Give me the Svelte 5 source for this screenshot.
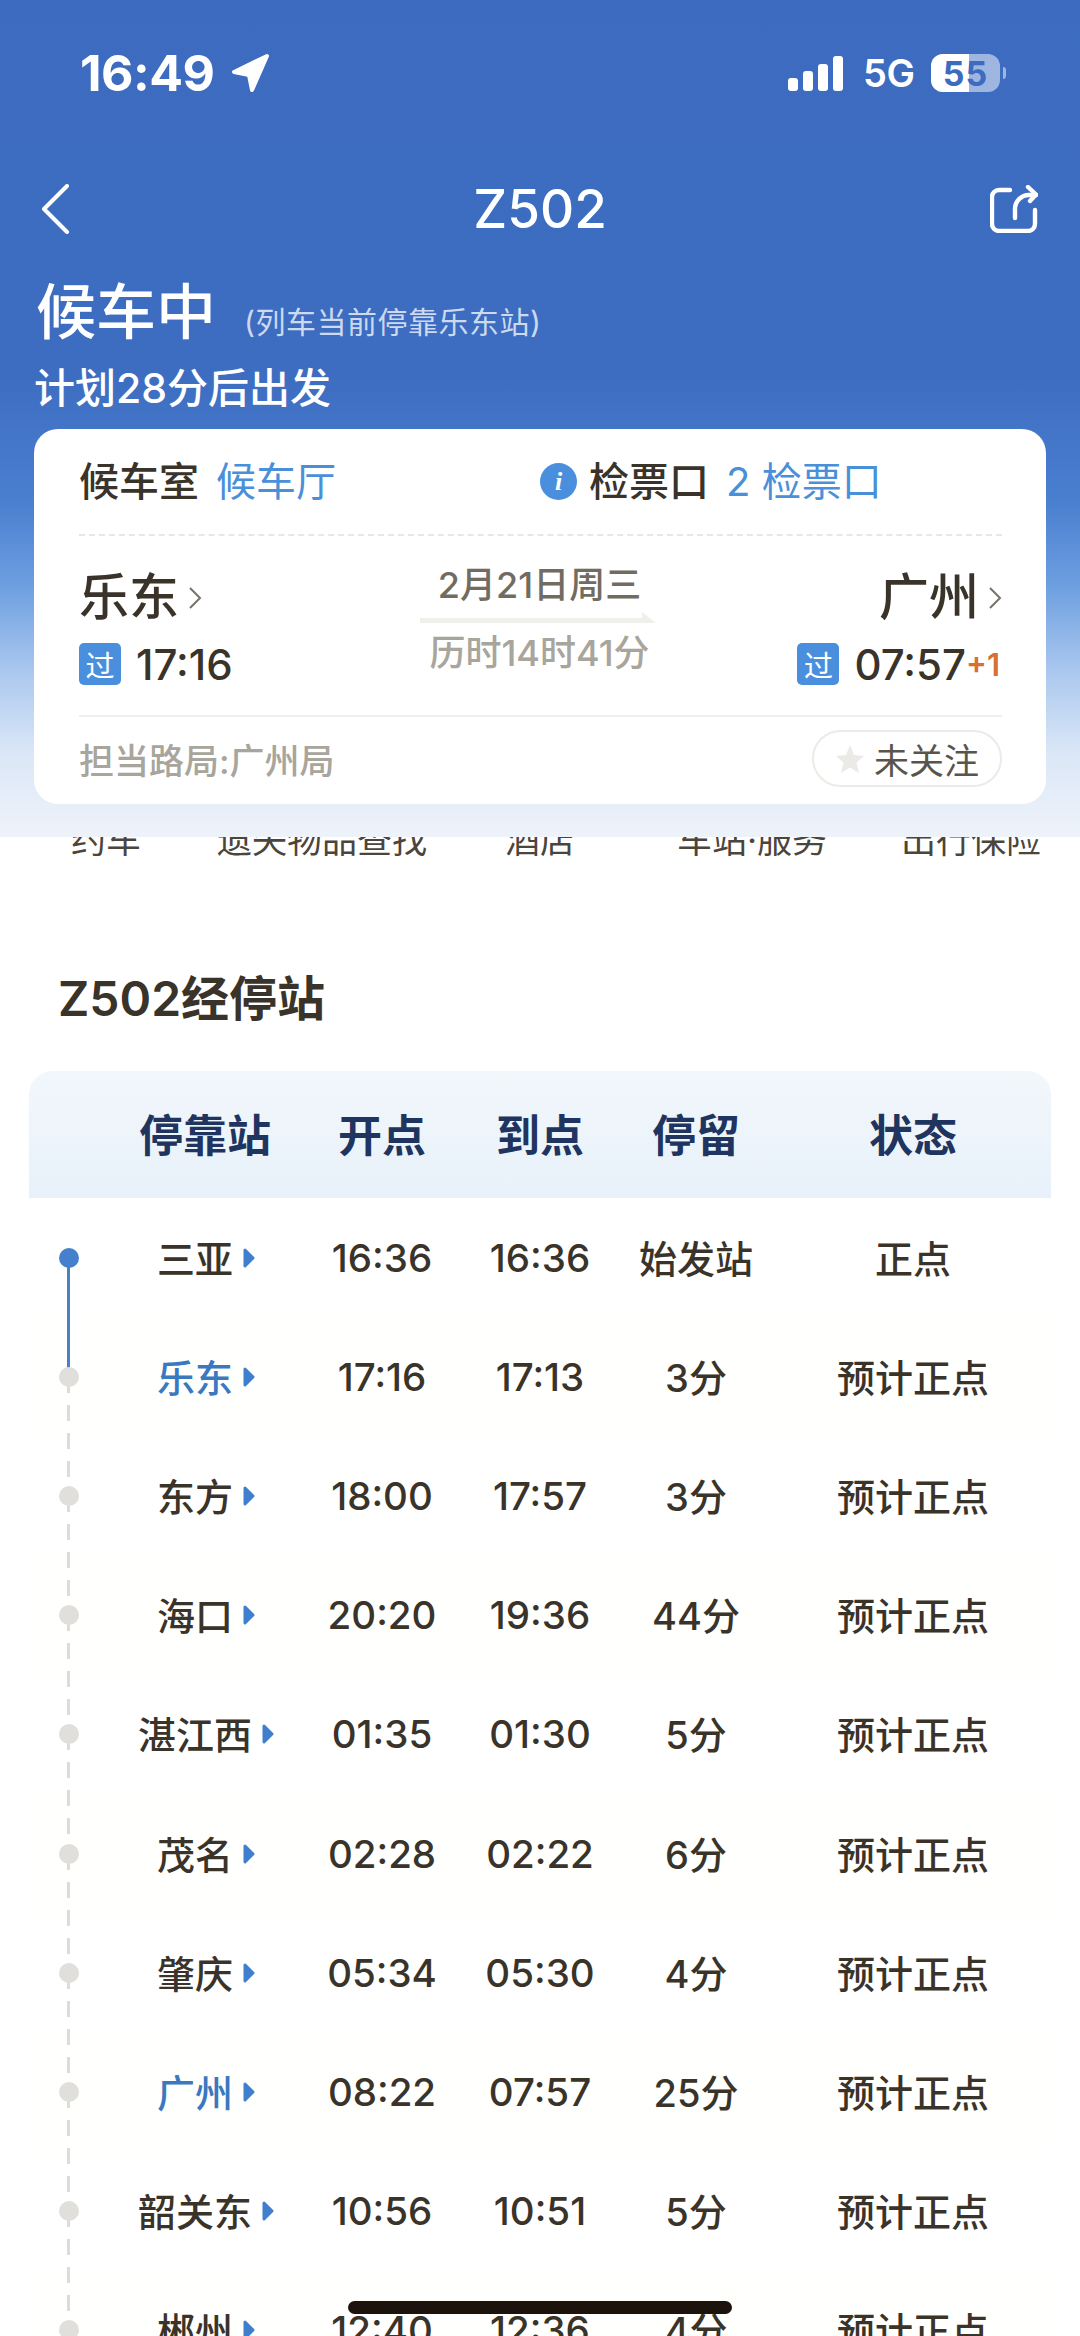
<script>
  const tools = [
    ['约车', 71], ['遗失物品查找', 217], ['酒店', 505], ['车站·服务', 677], ['出行保险', 901]
  ];
  const rows = [
    ['三亚', '16:36', '16:36', '始发站', '正点', false],
    ['乐东', '17:16', '17:13', '3分', '预计正点', true],
    ['东方', '18:00', '17:57', '3分', '预计正点', false],
    ['海口', '20:20', '19:36', '44分', '预计正点', false],
    ['湛江西', '01:35', '01:30', '5分', '预计正点', false],
    ['茂名', '02:28', '02:22', '6分', '预计正点', false],
    ['肇庆', '05:34', '05:30', '4分', '预计正点', false],
    ['广州', '08:22', '07:57', '25分', '预计正点', true],
    ['韶关东', '10:56', '10:51', '5分', '预计正点', false],
    ['郴州', '12:40', '12:36', '4分', '预计正点', false]
  ];
</script>

<div class="page">
  <section class="top">
    <div class="status">
      <div class="clock">
        <span>16:49</span>
        <svg class="loc" width="42" height="42" viewBox="0 0 42 42"><path d="M38 4 L5 20 L20 23 L23 38 Z" fill="#fff" stroke="#fff" stroke-width="4" stroke-linejoin="round"/></svg>
      </div>
      <div class="sys">
        <div class="signal"><i class="b1"></i><i class="b2"></i><i class="b3"></i><i class="b4"></i></div>
        <span class="net">5G</span>
        <div class="battery"><div class="fill"></div><span>55</span></div>
        <div class="nub"></div>
      </div>
    </div>

    <div class="nav">
      <svg width="30" height="50" viewBox="0 0 30 50"><path d="M27 2 L4 25 L27 48" fill="none" stroke="#fff" stroke-width="4" stroke-linecap="round" stroke-linejoin="round"/></svg>
      <div class="train">Z502</div>
      <svg class="share" width="48" height="48" viewBox="0 0 48 48" fill="none" stroke="#fff" stroke-width="4.4" stroke-linecap="round" stroke-linejoin="round"><path d="M20 5 H9 a7 7 0 0 0 -7 7 V39 a7 7 0 0 0 7 7 H38 a7 7 0 0 0 7 -7 V25"/><path d="M25 33 V24 a14 14 0 0 1 14 -14 h7"/><path d="M38 2 L46 9.5 L40 16"/></svg>
    </div>

    <div class="head"><h1>候车中</h1><span>(列车当前停靠乐东站)</span></div>
    <div class="plan">计划28分后出发</div>

    <div class="card">
      <div class="gate">
        <div class="pair"><b>候车室</b><em>候车厅</em></div>
        <div class="pair">
          <span class="info">i</span><b>检票口</b><em>2 检票口</em>
        </div>
      </div>

      <div class="route">
        <div class="end">
          <div class="city">乐东<svg width="14" height="22" viewBox="0 0 14 22"><path d="M2 1 L12 11 L2 21" fill="none" stroke="#77726a" stroke-width="2"/></svg></div>
          <div class="time"><span class="pass">过</span><span>17:16</span></div>
        </div>
        <div class="mid">
          <div class="date">2月21日周三</div>
          <svg class="bar" width="236" height="12" viewBox="0 0 236 12"><path d="M0 6 H222 V0 L236 11 H0 Z" fill="#f0efe9"/></svg>
          <div class="dur">历时14时41分</div>
        </div>
        <div class="end right">
          <div class="city">广州<svg width="14" height="22" viewBox="0 0 14 22"><path d="M2 1 L12 11 L2 21" fill="none" stroke="#77726a" stroke-width="2"/></svg></div>
          <div class="time"><span class="pass">过</span><span>07:57</span><span class="plus">+1</span></div>
        </div>
      </div>

      <div class="foot">
        <span class="bureau">担当路局:广州局</span>
        <div class="follow">
          <svg width="30" height="30" viewBox="0 0 30 30"><path d="M15 1 L19 11 L29 12 L21.500 18.500 L24 29 L15 23.500 L6 29 L8.500 18.500 L1 12 L11 11 Z" fill="#eceae6"/></svg>
          <span>未关注</span>
        </div>
      </div>
    </div>
  </section>

  <section class="sheet">
    <div class="tools">
      {#each tools as t}
        <span style="left:{t[1]}px">{t[0]}</span>
      {/each}
    </div>

    <h2>Z502经停站</h2>

    <div class="table">
      <div class="grid thead">
        <span></span><span>停靠站</span><span>开点</span><span>到点</span><span>停留</span><span class="st">状态</span>
      </div>
      {#each rows as r, i}
        <div class="grid row" class:alt={i % 2 === 1}>
          <span class="track" class:first={i === 0}><i></i></span>
          <span class="name" class:blue={r[5]}><span class="cjk">{r[0]}</span><svg width="12" height="20" viewBox="0 0 12 20"><path d="M2 2 L10 10 L2 18 Z" fill="#3f7fce" stroke="#3f7fce" stroke-width="3" stroke-linejoin="round"/></svg></span>
          <span class="num">{r[1]}</span>
          <span class="num">{r[2]}</span>
          <span class="cjk">{r[3]}</span>
          <span class="cjk st">{r[4]}</span>
        </div>
      {/each}
    </div>
  </section>

  <div class="home"></div>
</div>

<style>
  :global(body) { margin: 0; background: #fff; }
  .page {
    position: relative;
    width: 1080px;
    height: 2336px;
    overflow: hidden;
    background: #fff;
    color: #3a332a;
    font-family: Inter, "Noto Sans CJK SC", sans-serif;
  }
  .top {
    height: 837px;
    box-sizing: border-box;
    padding-top: 53px;
    background: linear-gradient(180deg, #3c6bc0 0, #3d6dc1 45%, #4a7fd0 60%, #6d9fe0 70%, #a9c7ee 80%, #dbe7f7 90%, #eef3fa 100%);
  }
  .status { display: flex; justify-content: space-between; align-items: center; height: 40px; padding: 0 74px 0 80px; color: #fff; }
  .clock { display: flex; align-items: center; gap: 14px; font-size: 50px; line-height: 40px; font-weight: 700; letter-spacing: -0.5px; }
  .sys { display: flex; align-items: center; }
  .signal { display: flex; align-items: flex-end; gap: 5px; height: 36px; }
  .signal i { display: block; width: 10px; background: #fff; border-radius: 3px; }
  .b1 { height: 13px; } .b2 { height: 20px; } .b3 { height: 27px; } .b4 { height: 35px; }
  .net { margin-left: 20px; font-size: 38px; font-weight: 600; letter-spacing: -0.5px; width: 50px; }
  .battery { position: relative; margin-left: 18px; width: 69px; height: 38px; border-radius: 12px; overflow: hidden; background: rgba(255,255,255,.5); }
  .fill { position: absolute; left: 0; top: 0; bottom: 0; width: 38px; background: #fff; }
  .battery span { position: absolute; inset: 0; display: flex; align-items: center; justify-content: center; color: #3c6bc0; font-size: 34px; font-weight: 700; letter-spacing: 1px; }
  .nub { margin-left: 3px; width: 3px; height: 12px; border-radius: 0 4px 4px 0; background: rgba(255,255,255,.5); }
  .nav { display: grid; grid-template-columns: 1fr auto 1fr; align-items: center; height: 50px; margin-top: 91px; padding: 0 42px 0 40px; }
  .share { justify-self: end; }
  .train { color: #fff; font-size: 53px; line-height: 50px; font-weight: 500; font-family: Inter, sans-serif; margin-left: 2px; }
  .head { display: flex; align-items: flex-end; gap: 28px; margin-top: 48px; padding-left: 36px; color: #fff; height: 60px; }
  h1 { margin: 0; font-size: 60px; font-weight: 500; line-height: 60px; }
  .head span { font-size: 30px; line-height: 40px; color: #ccd9ef; letter-spacing: 0.5px; }
  .plan { margin-top: 26px; padding-left: 34px; color: #fff; font-size: 41px; font-weight: 500; line-height: 40px; }
  .card { box-sizing: border-box; height: 375px; margin: 21px 34px 0; padding: 0 44px 0 45px; background: #fff; border-radius: 24px; }
  .gate { display: grid; grid-template-columns: 461px 1fr; align-items: center; height: 107px; border-bottom: 2px dashed #e9e7e1; box-sizing: border-box; }
  .pair { display: flex; align-items: center; gap: 18px; font-size: 40px; line-height: 44px; }
  .pair b { font-weight: 500; color: #3a332a; }
  .pair em { font-style: normal; font-weight: 400; color: #4a90d9; margin-left: -1px; }
  .info { display: flex; align-items: center; justify-content: center; width: 37px; height: 37px; margin-right: -6px; border-radius: 50%; background: #4a8fdd; color: #fff; font: italic 700 26px "Liberation Serif", serif; }
  .route { display: grid; grid-template-columns: 1fr auto 1fr; height: 181px; box-sizing: border-box; border-bottom: 2px solid #f1efe9; }
  .end { display: flex; flex-direction: column; }
  .right { align-items: flex-end; }
  .right .time { padding-right: 2px; }
  .city { display: flex; align-items: center; gap: 9px; height: 50px; margin-top: 36px; font-size: 50px; font-weight: 500; line-height: 50px; color: #3a332a; }
  .city svg { margin-top: 2px; }
  .time { display: flex; align-items: center; height: 42px; margin-top: 21px; font-size: 42px; font-weight: 500; color: #3a332a; }
  .pass { display: flex; align-items: center; justify-content: center; width: 42px; height: 42px; margin-right: 15px; border-radius: 5px; background: #4a8fdd; color: #fff; font-size: 29px; font-weight: 400; }
  .plus { margin-left: 0; font-size: 31px; font-weight: 600; color: #d87030; }
  .mid { display: flex; flex-direction: column; align-items: center; margin: 0 2px 0 0; padding-top: 28px; }
  .date { font-size: 36px; line-height: 42px; color: #716c62; font-weight: 500; }
  .bar { margin: 6px 4px 0 0; display: block; }
  .dur { margin-top: 8px; font-size: 36px; line-height: 42px; color: #a8a59c; font-weight: 500; }
  .foot { display: flex; justify-content: space-between; align-items: center; height: 87px; padding-bottom: 4px; box-sizing: border-box; }
  .bureau { font-size: 35px; color: #a8a59c; font-weight: 500; }
  .follow { display: flex; align-items: center; gap: 9px; box-sizing: border-box; width: 190px; height: 57px; padding-left: 21px; border: 2px solid #ecebe6; border-radius: 29px; font-size: 35px; color: #5a554c; }
  .sheet { position: relative; height: 1499px; background: #fff; border-radius: 24px 24px 0 0; overflow: hidden; }
  .tools { position: relative; height: 21px; }
  .tools span { position: absolute; top: -15px; white-space: nowrap; font-size: 35px; line-height: 36px; color: #4b453c; }
  h2 { margin: 113px 0 0 58px; font-size: 48px; line-height: 56px; font-weight: 600; color: #3a332a; }
  .table { margin: 44px 29px 0; }
  .grid { display: grid; grid-template-columns: 80px 192px 162px 154px 158px 1fr; align-items: center; text-align: center; }
  .thead { height: 127px; padding-bottom: 3px; box-sizing: border-box; border-radius: 24px 24px 0 0; background: linear-gradient(180deg, #f2f7fb, #e8f1fa); color: #1f3560; font-size: 44px; font-weight: 600; }
  .row { height: 119.2px; font-size: 38px; font-weight: 500; color: #3a332a; }
  .alt { background: #fffffd; }
  .cjk { display: block; padding-bottom: 3px; }
  .track { position: relative; display: block; height: 100%; }
  .track i { position: absolute; left: 29.500px; top: 50%; width: 20px; height: 20px; margin-top: -10px; border-radius: 50%; background: #e0dfdb; z-index: 1; }
  .track::after { content: ""; position: absolute; left: 38px; top: 50%; width: 3px; height: 119.2px; background: repeating-linear-gradient(180deg, #dedcd8 0 16px, transparent 16px 28px); }
  .first i { background: #4480cc; }
  .first::after { background: #4a80c4; }
  .name { display: flex; align-items: center; justify-content: center; gap: 10px; padding-left: 2px; }
  .name.blue { color: #3a78c0; }
  .num { font-size: 38.500px; }
  .home { position: absolute; left: 348px; top: 2301px; width: 384px; height: 13px; border-radius: 7px; background: #1c140c; }
</style>
